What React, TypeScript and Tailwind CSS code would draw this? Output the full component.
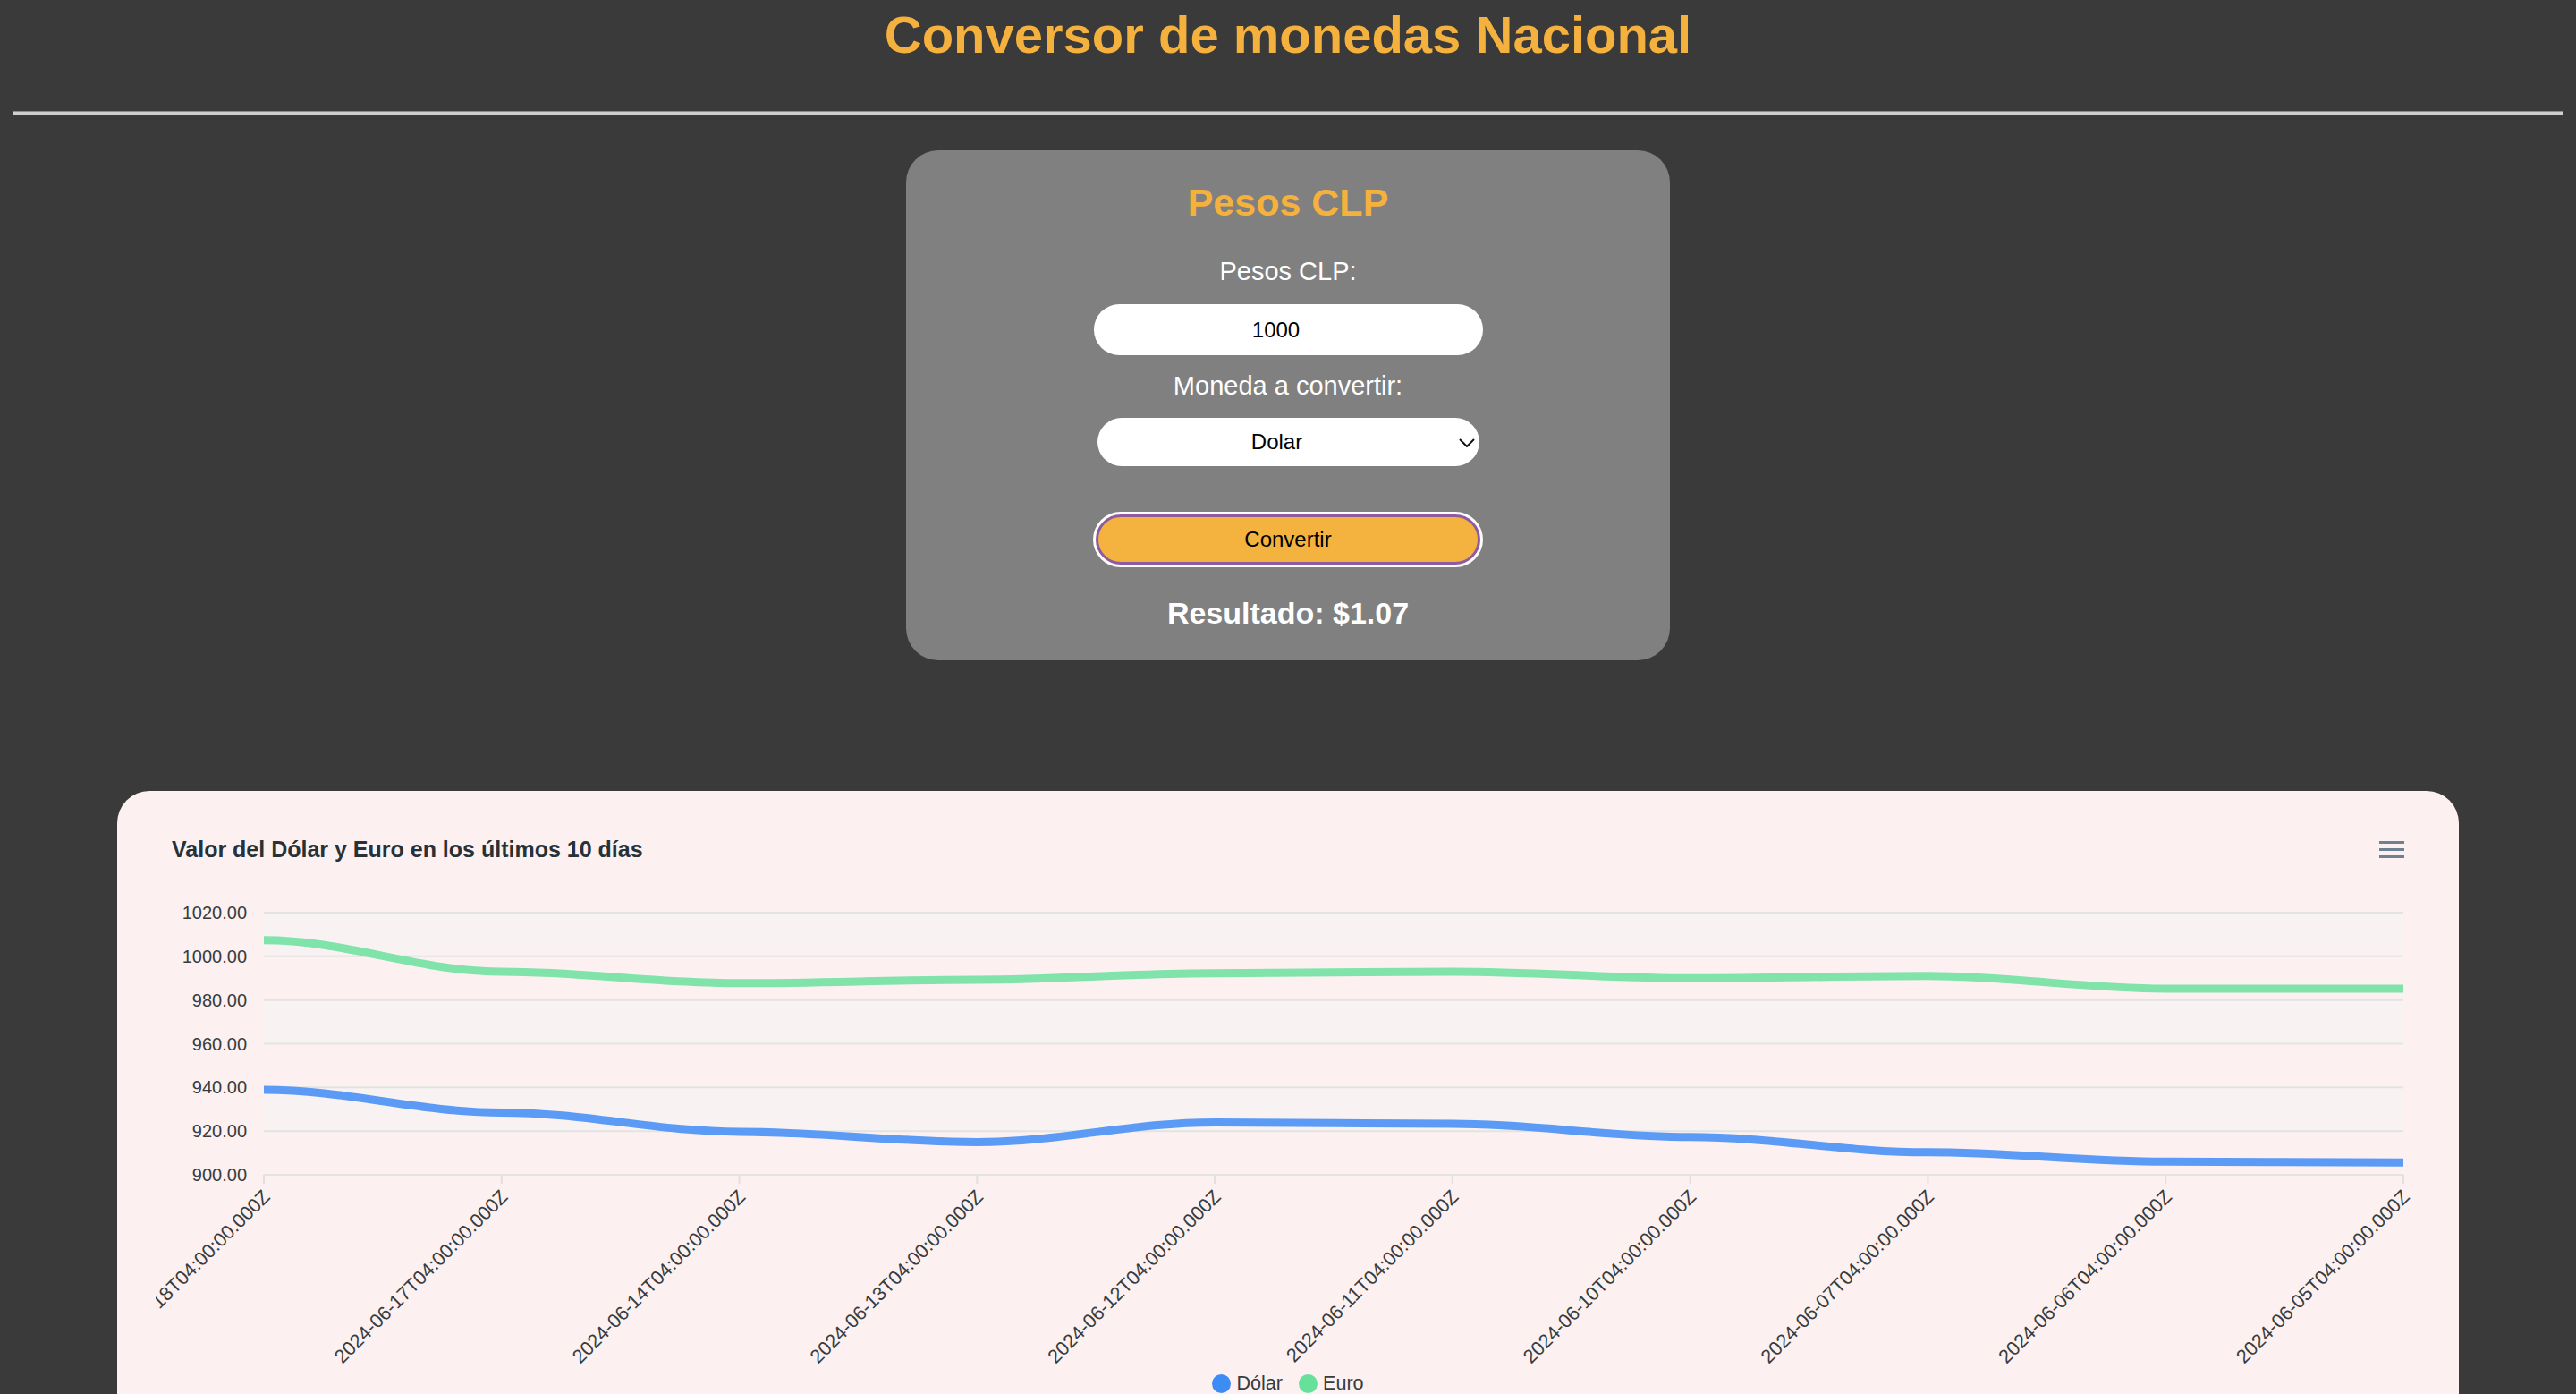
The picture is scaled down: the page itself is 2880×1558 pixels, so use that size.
import { useState } from "react";

// fechas del eje x (orden como viene de la api)
const fechas = [
  "2024-06-18",
  "2024-06-17",
  "2024-06-14",
  "2024-06-13",
  "2024-06-12",
  "2024-06-11",
  "2024-06-10",
  "2024-06-07",
  "2024-06-06",
  "2024-06-05",
].map((d) => `${d}T04:00:00.000Z`);

const dolar = [938.9, 928.5, 919.7, 915, 924, 923.3, 917.3, 910.3, 906, 905.6];
const euro = [1007.4, 993, 987.7, 989.3, 992.3, 993, 990, 991, 985.2, 985.2];

// medidas del grafico (px)
const PLOT_L = 121;
const PLOT_R = 2513;
const Y_TOP = 56;
const Y_BOT = 349;
const yOf = (v: number) => Y_BOT - (v - 900) * ((Y_BOT - Y_TOP) / 120);
const xOf = (i: number) => PLOT_L + i * ((PLOT_R - PLOT_L) / 9);

function smoothPath(values: number[]) {
  const pts = values.map((v, i) => [xOf(i), yOf(v)]);
  let d = `M${pts[0][0]},${pts[0][1]}`;
  for (let i = 1; i < pts.length; i++) {
    const [px, py] = pts[i - 1];
    const [x, y] = pts[i];
    const div = (x - px) * 0.35;
    d += ` C${px + div},${py} ${x - div},${y} ${x},${y}`;
  }
  return d;
}

function Grafico() {
  const ticks = [1020, 1000, 980, 960, 940, 920, 900];
  const bandas = [1020, 980, 940];

  return (
    <div className="w-[2618px] mx-auto mt-[146px] rounded-[36px] bg-[#fcf0f0] px-[43px] pt-[50px] pb-[80px]">
      <div className="flex items-center justify-between px-[18px]">
        <span className="text-[25px] leading-[30px] font-bold text-[#263238]">
          Valor del Dólar y Euro en los últimos 10 días
        </span>
        <div className="flex flex-col gap-[5px] w-[28px]">
          <div className="h-[3px] bg-[#6e8192]" />
          <div className="h-[3px] bg-[#6e8192]" />
          <div className="h-[3px] bg-[#6e8192]" />
        </div>
      </div>

      <svg width={2532} height={566} className="block">
        {bandas.map((b) => (
          <rect
            key={b}
            x={PLOT_L}
            y={yOf(b)}
            width={PLOT_R - PLOT_L}
            height={yOf(b - 20) - yOf(b)}
            fill="#f3f3f3"
            fillOpacity={0.5}
          />
        ))}
        {ticks.map((t) => (
          <g key={t}>
            <line x1={PLOT_L} x2={PLOT_R} y1={yOf(t)} y2={yOf(t)} stroke="#e3e3e3" strokeWidth={2} />
            <text
              x={102}
              y={yOf(t)}
              textAnchor="end"
              dominantBaseline="central"
              fontSize={20}
              fill="#373d3f"
              fontFamily="Liberation Sans, Arial, sans-serif"
            >
              {t.toFixed(2)}
            </text>
          </g>
        ))}
        {fechas.map((f, i) => (
          <g key={f}>
            <line x1={xOf(i)} x2={xOf(i)} y1={Y_BOT} y2={Y_BOT + 10} stroke="#e0e0e0" strokeWidth={2} />
            <text
              x={xOf(i) + 8}
              y={375}
              textAnchor="end"
              fontSize={21.6}
              fill="#373d3f"
              fontFamily="Liberation Sans, Arial, sans-serif"
              transform={`rotate(-45 ${xOf(i) + 8} 375)`}
            >
              {f}
            </text>
          </g>
        ))}
        <path d={smoothPath(euro)} fill="none" stroke="#7fe3aa" strokeWidth={9} />
        <path d={smoothPath(dolar)} fill="none" stroke="#5b9bf5" strokeWidth={9} />
      </svg>

      <div className="flex justify-center items-center gap-[18px] mt-[4px] text-[21.6px] leading-[24px] text-[#373d3f]">
        <div className="flex items-center gap-[6px]">
          <span className="w-[21px] h-[21px] rounded-full bg-[#3d8bf5]" />
          Dólar
        </div>
        <div className="flex items-center gap-[6px]">
          <span className="w-[21px] h-[21px] rounded-full bg-[#66e09b]" />
          Euro
        </div>
      </div>
    </div>
  );
}

export default function App() {
  const [pesos, setPesos] = useState("1000");
  const [moneda, setMoneda] = useState("dolar");

  return (
    <div className="min-h-screen bg-[#3a3a3a] px-[14px] font-['Liberation_Sans',Arial,sans-serif]">
      <h1 className="pt-[6px] text-center text-[58px] leading-[66px] font-bold text-[#f5b13d]">
        Conversor de monedas Nacional
      </h1>
      <div className="mt-[52px] h-[4px] border-t border-[#8c8c8c] bg-[#cfcfcf]" />

      {/* conversor */}
      <div className="w-[854px] mx-auto mt-[40px] rounded-[36px] bg-[#808080] pt-[33px] pb-[33px] flex flex-col items-center">
        <h2 className="text-[43px] leading-[50px] font-bold text-[#f5b13d]">Pesos CLP</h2>
        <label className="mt-[35px] text-[29px] leading-[34px] text-white">Pesos CLP:</label>
        <input
          value={pesos}
          onChange={(e) => setPesos(e.target.value)}
          className="mt-[20px] w-[435px] h-[57px] rounded-full bg-white text-center text-[24px] text-black pr-[27px] outline-none"
        />
        <label className="mt-[17px] text-[29px] leading-[34px] text-white">Moneda a convertir:</label>
        <div className="relative mt-[19px] w-[427px] h-[54px]">
          <select
            value={moneda}
            onChange={(e) => setMoneda(e.target.value)}
            className="appearance-none w-full h-full rounded-full bg-white text-center [text-align-last:center] text-[24px] text-black pr-[25px] outline-none"
          >
            <option value="dolar">Dolar</option>
            <option value="euro">Euro</option>
          </select>
          <svg className="absolute right-[5px] top-[23px] pointer-events-none" width="18" height="10" viewBox="0 0 18 10">
            <path d="M1 1 L9 9 L17 1" fill="none" stroke="#111" strokeWidth="2" />
          </svg>
        </div>
        <button className="mt-[54px] w-[430px] h-[56px] rounded-full border-[3px] border-[#8e5aa0] bg-[#f4b23f] shadow-[0_0_0_3px_#ffffff] text-[24px] text-black">
          Convertir
        </button>
        <h3 className="mt-[34px] text-[34px] leading-[40px] font-bold text-white">Resultado: $1.07</h3>
      </div>

      <Grafico />
    </div>
  );
}
